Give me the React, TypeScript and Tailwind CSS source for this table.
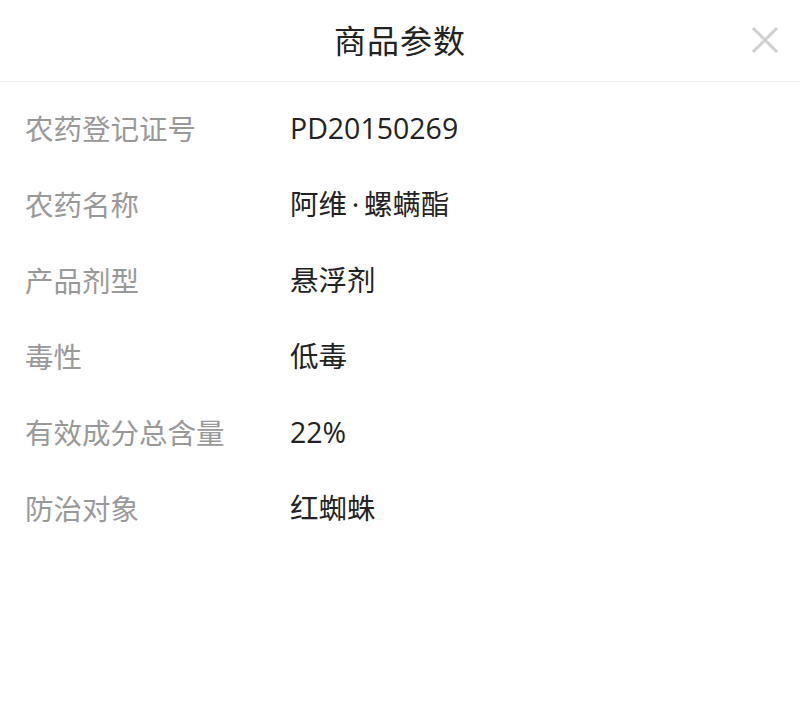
import React from "react";

const PARAMS = [
    { label: "农药登记证号", value: "PD20150269" },
    { label: "农药名称", value: "阿维\u2009·\u2009螺螨酯" },
    { label: "产品剂型", value: "悬浮剂" },
    { label: "毒性", value: "低毒" },
    { label: "有效成分总含量", value: "22%" },
    { label: "防治对象", value: "红蜘蛛" },
];

const App = () => {
    return (
        <div className="w-[800px] h-[723px] bg-white font-['Noto_Sans_CJK_SC','Noto_Sans',sans-serif]">
            {/* Header */}
            <div className="relative h-[82px] flex items-center justify-center border-b border-[#f0f0f0]">
                <h1 className="text-[32px] leading-none text-[#222] tracking-[1px] -mt-[3px]">商品参数</h1>
                <button className="absolute right-[20px] top-[25px] w-[30px] h-[30px] flex items-center justify-center">
                    <svg width="28" height="28" viewBox="0 0 28 28" fill="none">
                        <path d="M2 2L26 26M26 2L2 26" stroke="#cfcfcf" strokeWidth="3" />
                    </svg>
                </button>
            </div>

            {/* Params list */}
            <div className="pt-[8px]">
                {PARAMS.map((item) => (
                    <div key={item.label} className="h-[76px] flex items-center px-[25px]">
                        <span className="w-[265px] text-[28.5px] text-[#999]">{item.label}</span>
                        <span className="text-[28.5px] text-[#222] font-['Open_Sans','Noto_Sans_CJK_SC',sans-serif]">
                            {item.value}
                        </span>
                    </div>
                ))}
            </div>
        </div>
    );
};

export default App;
